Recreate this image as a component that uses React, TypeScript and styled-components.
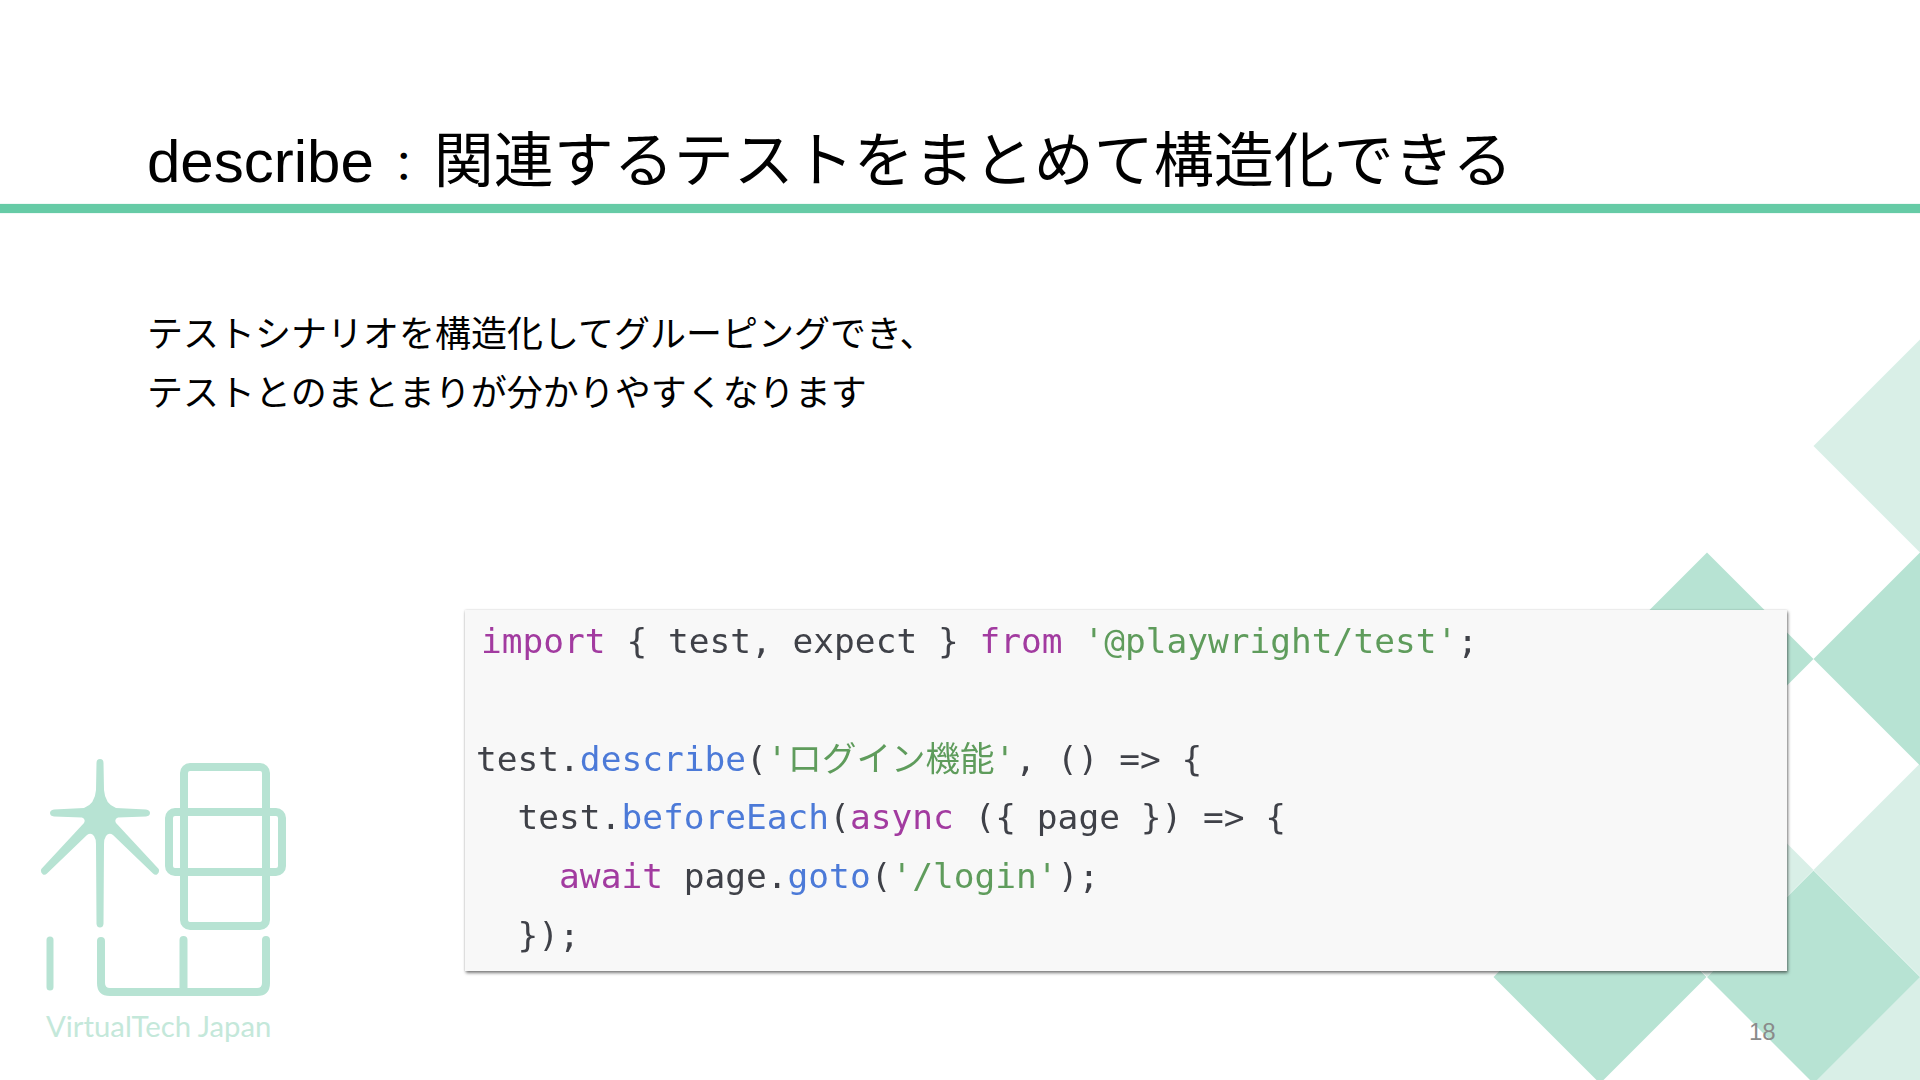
import React from 'react';
import styled, { createGlobalStyle } from 'styled-components';

const Global = createGlobalStyle`
  html, body { margin: 0; padding: 0; background: #fff; }
  #root { width: 1920px; height: 1080px; }
`;

const Slide = styled.div`
  position: relative;
  width: 1920px;
  height: 1080px;
  overflow: hidden;
  background: #fff;
  color: #000;
  font-family: "Liberation Sans", "Noto Sans CJK JP", sans-serif;
`;

const Backdrop = styled.svg`
  position: absolute;
  inset: 0;
  width: 1920px;
  height: 1080px;
`;

const Content = styled.div`
  position: relative;
  display: flex;
  flex-direction: column;
  height: 100%;
`;

const Header = styled.header`
  display: flex;
  align-items: flex-end;
  height: 204px;
  padding-left: 147px;
`;

const Title = styled.h1`
  margin: 0 0 7px;
  font-size: 60px;
  font-weight: 400;
  line-height: 70px;
  white-space: pre;
`;

const TitleColon = styled.span`
  display: inline-block;
  width: 60px;
  font-size: 42px;
  line-height: 0;
  text-align: center;
`;

const Rule = styled.div`
  height: 9px;
  background: #66cba6;
  box-shadow: 0 0 1px rgba(102, 203, 166, 0.6);
`;

const Lead = styled.div`
  margin-top: 92px;
  padding-left: 147px;
  font-size: 36px;
  line-height: 59px;
`;

const LeadLine = styled.div`
  white-space: pre;
`;

const Lower = styled.div`
  display: flex;
  align-items: flex-start;
  margin-top: 187px;
  padding-left: 40px;
`;

const Brand = styled.div`
  display: flex;
  flex-direction: column;
  width: 250px;
  margin-top: 145px;
`;

const BrandMark = styled.svg`
  display: block;
  width: 250px;
  height: 245px;
`;

const BrandName = styled.div`
  margin: 9px 0 0 6px;
  font-family: "Lato", sans-serif;
  font-size: 29.3px;
  line-height: 34px;
  font-weight: 400;
  color: #c4e8da;
  white-space: pre;
`;

const CodePanel = styled.div`
  box-sizing: border-box;
  width: 1322px;
  height: 361px;
  margin-left: 175px;
  padding-top: 2px;
  background: #f8f8f8;
  box-shadow: 1px 2px 3px rgba(0, 0, 0, 0.5), 0 0 2px rgba(0, 0, 0, 0.15);
`;

const CodeLine = styled.div<{ $offset?: number }>`
  height: 58.8px;
  margin-left: ${(p) => p.$offset ?? 11}px;
  font-family: "DejaVu Sans Mono", "Noto Sans CJK JP", monospace;
  font-size: 34.5px;
  line-height: 58.8px;
  color: #3f4148;
  white-space: pre;
  filter: blur(0.5px);
`;

const Keyword = styled.span`
  color: #a23ba0;
`;
const Str = styled.span`
  color: #5f9c5c;
`;
const Fn = styled.span`
  color: #4c7ad8;
`;

const PageNumber = styled.div`
  position: absolute;
  left: 1749px;
  top: 1019px;
  font-size: 24px;
  line-height: 26px;
  color: #8a8a8a;
`;

const dark = '#b7e3d3';
const light = '#d9efe7';
const H = 106.5;
const diamonds: [number, number, string][] = [
  [1920, 446, light],
  [1920, 870, light],
  [1707, 870, light],
  [1920, 1083, light],
  [1707, 659, dark],
  [1920, 659, dark],
  [1813.5, 977, dark],
  [1600, 977, dark],
];

const TREE =
  'M100 759Q103.5 759 103.5 763L104 790Q105 804 116 808L146 809.5Q150 810 150 813Q150 816 146 816.5L118 817.5Q114 819 116 823' +
  'L158.7 869Q160 872 157 874.5Q155 875.5 153 873.5L113 835Q109 832 106 836Q104 839 104 844L103.5 924Q103 927.5 100 927.5' +
  'Q97 927.5 96.5 924L96 844Q96 839 94 836Q91 832 87 835L47 873.5Q45 875.5 43 874.5Q40 872 41.3 869L84 823Q86 819 82 817.5L54 816.5' +
  'Q50 816 50 813Q50 810 54 809.5L84 808Q95 804 96 790L96.5 763Q96.5 759 100 759Z';

export default function App() {
  return (
    <Slide>
      <Global />
      <Backdrop viewBox="0 0 1920 1080" aria-hidden="true">
        {diamonds.map(([x, y, c], i) => (
          <polygon
            key={i}
            fill={c}
            points={`${x - H},${y} ${x},${y - H} ${x + H},${y} ${x},${y + H}`}
          />
        ))}
      </Backdrop>
      <Content>
        <Header>
          <Title>describe<TitleColon>：</TitleColon>関連するテストをまとめて構造化できる</Title>
        </Header>
        <Rule />
        <Lead>
          <LeadLine>テストシナリオを構造化してグルーピングでき、</LeadLine>
          <LeadLine>テストとのまとまりが分かりやすくなります</LeadLine>
        </Lead>
        <Lower>
          <Brand>
            <BrandMark viewBox="40 755 250 245" fill="none" stroke="#b7e3d3" strokeLinecap="round" strokeLinejoin="round">
              <path d={TREE} fill="#b7e3d3" stroke="none" />
              <rect x="184" y="767" width="82" height="159" rx="6" strokeWidth="8" />
              <rect x="169" y="812" width="113" height="60" rx="6" strokeWidth="8" />
              <path d="M50 940V987" strokeWidth="7" />
              <path d="M101 941V983Q101 992 110 992H257Q266 992 266 983V940M183.5 940V992" strokeWidth="8" />
            </BrandMark>
            <BrandName>VirtualTech Japan</BrandName>
          </Brand>
          <CodePanel>
            <CodeLine $offset={16}>
              <Keyword>import</Keyword>{' { test, expect } '}<Keyword>from</Keyword> <Str>'@playwright/test'</Str>;
            </CodeLine>
            <CodeLine />
            <CodeLine>
              test.<Fn>describe</Fn>(<Str>'ログイン機能'</Str>{', () => {'}
            </CodeLine>
            <CodeLine>
              {'  test.'}<Fn>beforeEach</Fn>(<Keyword>async</Keyword>{' ({ page }) => {'}
            </CodeLine>
            <CodeLine>
              {'    '}<Keyword>await</Keyword>{' page.'}<Fn>goto</Fn>(<Str>'/login'</Str>);
            </CodeLine>
            <CodeLine>{'  });'}</CodeLine>
          </CodePanel>
        </Lower>
      </Content>
      <PageNumber>18</PageNumber>
    </Slide>
  );
}
